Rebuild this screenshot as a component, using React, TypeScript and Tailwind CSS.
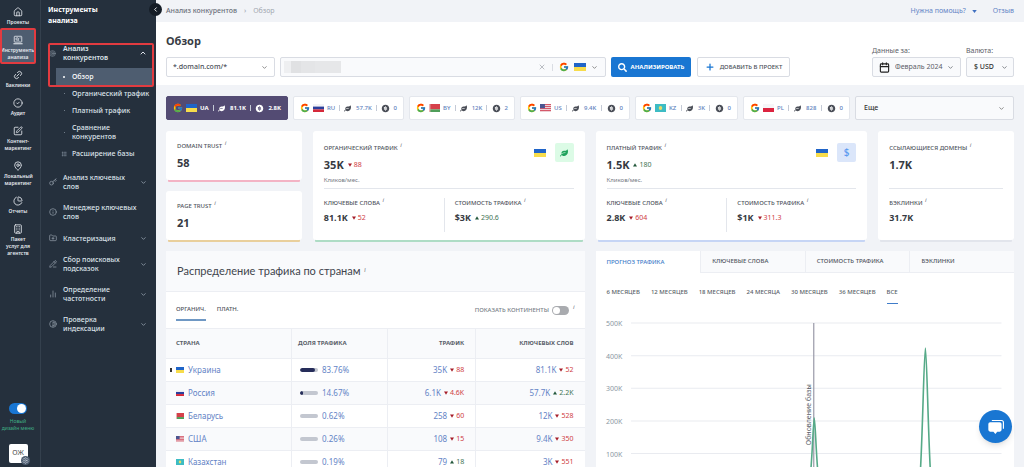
import React, { useState } from "react";
import {
  House,
  Link2,
  CircleCheck,
  SquarePen,
  MapPin,
  ChartPie,
  Building,
  ChevronDown,
  ChevronUp,
  ChevronLeft,
  Target,
  Key,
  Info,
  FolderPlus,
  PencilLine,
  ChartNoAxesColumn,
  Contrast,
  Plus,
  X,
  Calendar,
  Settings,
  Grip,
} from "lucide-react";
import { FcGoogle } from "react-icons/fc";
import { FaLeaf, FaSearch } from "react-icons/fa";
import { RiMoneyDollarCircleFill } from "react-icons/ri";

type Country = "UA" | "RU" | "BY" | "US" | "KZ" | "PL";

function Flag({ code, className }: { code: Country; className: string }) {
  return (
    <svg viewBox="0 0 12 8" preserveAspectRatio="none" className={`shrink-0 ${className}`} aria-hidden="true">
      {code === "UA" && (
        <>
          <rect width="12" height="4" fill="#1f64c8" />
          <rect y="4" width="12" height="4" fill="#f7dc4b" />
        </>
      )}
      {code === "RU" && (
        <>
          <rect width="12" height="8" fill="#f3f3f6" />
          <rect y="2.6" width="12" height="2.8" fill="#2b3f9c" />
          <rect y="5.4" width="12" height="2.6" fill="#d5293a" />
        </>
      )}
      {code === "BY" && (
        <>
          <rect width="12" height="5.4" fill="#d5404a" />
          <rect y="5.4" width="12" height="2.6" fill="#4f9e5a" />
          <rect width="1.5" height="8" fill="#e7b3b3" />
        </>
      )}
      {code === "US" && (
        <>
          <rect width="12" height="8" fill="#f0dfe2" />
          {[0, 2, 4, 6].map((y) => (
            <rect key={y} y={y} width="12" height="1.1" fill="#d5596a" />
          ))}
          <rect width="5.4" height="4.2" fill="#4b5590" />
        </>
      )}
      {code === "KZ" && (
        <>
          <rect width="12" height="8" fill="#3dbcc4" />
          <circle cx="6" cy="4" r="1.9" fill="#e6dc6a" />
        </>
      )}
      {code === "PL" && (
        <>
          <rect width="12" height="8" fill="#f6f6f8" />
          <rect y="4" width="12" height="4" fill="#dc2440" />
        </>
      )}
    </svg>
  );
}

function ToolsIcon({ className }: { className?: string }) {
  return (
    <svg viewBox="0 0 24 24" fill="none" stroke="currentColor" strokeWidth="2" className={className} aria-hidden="true">
      <rect x="3" y="3" width="18" height="14" rx="1.5" />
      <path d="M1 21h22" strokeWidth="2.6" />
      <circle cx="10" cy="9.5" r="3" />
      <path d="M12.3 11.8l2.6 2.4M16 7h2" />
    </svg>
  );
}

const rail = [
  { label: "Проекты", Icon: House },
  { label: "Инструменты анализа", Icon: ToolsIcon, active: true },
  { label: "Баклинки", Icon: Link2 },
  { label: "Аудит", Icon: CircleCheck },
  { label: "Контент-маркетинг", Icon: SquarePen },
  { label: "Локальный маркетинг", Icon: MapPin },
  { label: "Отчеты", Icon: ChartPie },
  { label: "Пакет услуг для агентств", Icon: Building },
];

function Rail() {
  const [on, setOn] = useState(true);
  return (
    <nav className="flex w-[41px] shrink-0 flex-col border-r border-[#34404d] pt-[2px]">
      {rail.map(({ label, Icon, active }) => (
        <a
          key={label}
          href="#"
          className={`relative mr-1 mb-[3px] flex flex-col items-center pt-[5px] pb-px text-center text-[5px] leading-[7px] font-semibold text-[#e4e8ee] ${active ? "bg-[#4e5d70]" : ""}`}
        >
          <Icon className={`mb-[2px] size-[10px] ${label === "Баклинки" ? "-rotate-45" : ""}`} />
          <span className={active ? "" : "w-[28px]"}>{label}</span>
          {active && <span className="absolute -inset-y-[2px] right-0 left-0 rounded-[2px] border-2 border-[#e23b40]" />}
        </a>
      ))}
      <div className="mt-auto mr-1 flex flex-col items-center pb-[4px]">
        <label className="flex flex-col items-center text-center text-[5px] leading-[7px] text-[#3fae84]">
          <input
            type="checkbox"
            role="switch"
            checked={on}
            onChange={() => setOn(!on)}
            className="peer sr-only"
          />
          <span className="mb-[4px] flex h-[11px] w-[18px] items-center rounded-full bg-[#8b95a1] p-px peer-checked:justify-end peer-checked:bg-[#1976d2]">
            <span className="size-[9px] rounded-full bg-white" />
          </span>
          <span>
            Новый
            <br />
            дизайн меню
          </span>
        </label>
        <button className="relative mt-3 size-[19px] rounded-[2px] bg-white text-[7px] text-[#444]">
          ОЖ
          <Settings className="absolute -right-[2px] -bottom-[2px] size-[9px] rounded-full bg-[#4e5d70] p-px text-[#cfd6df]" />
        </button>
      </div>
    </nav>
  );
}

const subItems = [
  { label: "Обзор", active: true },
  { label: "Органический трафик" },
  { label: "Платный трафик" },
  { label: "Сравнение конкурентов" },
  { label: "Расширение базы", grip: true },
];

const groups = [
  { label: "Анализ ключевых слов", Icon: Key, arrow: true },
  { label: "Менеджер ключевых слов", Icon: Info, arrow: false },
  { label: "Кластеризация", Icon: FolderPlus, arrow: true },
  { label: "Сбор поисковых подсказок", Icon: PencilLine, arrow: true },
  { label: "Определение частотности", Icon: ChartNoAxesColumn, arrow: true },
  { label: "Проверка индексации", Icon: Contrast, arrow: true },
];

function ToolsMenu() {
  return (
    <nav className="relative w-[115px] shrink-0 pt-[4px] text-[7px] leading-[9px] font-medium text-[#dce2e9]">
      <h2 className="w-[70px] pl-[7px] leading-[11px] font-bold text-white">Инструменты анализа</h2>
      <button
        aria-label="Свернуть меню"
        className="absolute top-[3px] -right-[6px] z-10 flex size-[13px] items-center justify-center rounded-full bg-[#151d27] text-white"
      >
        <ChevronLeft className="size-[7px]" strokeWidth={3} />
      </button>
      <div className="relative mt-3 mb-[5px]">
        <button className="flex h-[30px] w-full items-center pr-[9px] pl-[8px] text-left font-semibold">
          <Target className="mr-[7px] size-[7px] shrink-0 text-[#7f8b98]" />
          <span className="w-[66px]">Анализ конкурентов</span>
          <ChevronUp className="ml-auto size-[8px]" strokeWidth={3} />
        </button>
        <ul className="pr-[4px] pl-[15px]">
          {subItems.map(({ label, active, grip }) => (
            <li key={label}>
              <a
                href="#"
                className={`flex min-h-[17px] items-center py-[4px] ${active ? "bg-[#4e5d70] text-white" : ""}`}
              >
                <span className="flex w-[16px] shrink-0 justify-center">
                  {grip ? (
                    <Grip className="size-[6px] text-[#8995a3]" />
                  ) : (
                    <span className={`rounded-full ${active ? "size-[2px] bg-white" : "size-px bg-[#8995a3]"}`} />
                  )}
                </span>
                <span className={label.startsWith("Сравнение") ? "w-[60px]" : "whitespace-nowrap"}>{label}</span>
              </a>
            </li>
          ))}
        </ul>
        <span className="pointer-events-none absolute top-[5px] right-[2px] left-[7px] h-[44px] rounded-[2px] border-2 border-[#e23b40]" />
      </div>
      {groups.map(({ label, Icon, arrow }) => (
        <button key={label} className="flex min-h-[22px] w-full items-center py-[6px] pr-[9px] pl-[8px] text-left">
          <Icon className="mr-[6px] size-[8px] shrink-0 text-[#9aa5b1]" />
          <span className={label.startsWith("Анализ") ? "w-[66px]" : "w-[80px]"}>{label}</span>
          {arrow && <ChevronDown className="ml-auto size-[7px] shrink-0 text-[#8a96a3]" strokeWidth={3} />}
        </button>
      ))}
    </nav>
  );
}

function Toolbar() {
  return (
    <section className="flex items-end justify-between bg-white px-[10px] pt-[11px] pb-2">
      <div className="min-w-0">
        <h1 className="mb-2 text-[11px] leading-4 font-bold text-[#383c44]">Обзор</h1>
        <div className="flex gap-[5px]">
          <div className="relative flex w-[109px] items-center">
            <select
              aria-label="Тип домена"
              className="h-5 w-full appearance-none rounded-[2px] border border-[#d9dce3] bg-white pl-[6px] text-[7px] font-medium text-[#4a4e57]"
            >
              <option>*.domain.com/*</option>
            </select>
            <ChevronDown className="pointer-events-none absolute right-[7px] size-[7px] text-[#666]" strokeWidth={2.5} />
          </div>
          <div className="relative flex h-5 w-[326px] items-center gap-[6px] rounded-[2px] border border-[#d9dce3] bg-[#f9fafc] px-[7px]">
            <div className="absolute left-[3px] grid h-[12px] w-[57px] grid-cols-[7px_10px_14px_26px]">
              <span className="bg-[#eeeff1]" />
              <span className="bg-[#e0e1e3]" />
              <span className="bg-[#e4e5e7]" />
              <span className="bg-[#e6e7e9]" />
            </div>
            <input aria-label="Домен" className="h-full min-w-0 flex-1 bg-transparent text-[7px] outline-none" />
            <button aria-label="Очистить">
              <X className="size-[8px] text-[#9a9ea6]" />
            </button>
            <span className="h-[7px] w-px bg-[#dadde3]" />
            <button aria-label="Поисковая система" className="flex items-center gap-[5px]">
              <FcGoogle className="size-[10px]" />
              <Flag code="UA" className="h-[8px] w-[12px]" />
              <ChevronDown className="size-[7px] text-[#666]" strokeWidth={2.5} />
            </button>
          </div>
          <button className="flex h-5 w-[80px] items-center justify-center gap-[4px] rounded-[2px] bg-[#1976d2] text-[6px] font-bold text-white">
            <FaSearch className="size-[9px]" />
            АНАЛИЗИРОВАТЬ
          </button>
          <button className="ml-px flex h-5 w-[93px] items-center justify-center gap-[5px] rounded-[2px] border border-[#d9dce3] bg-white text-[6px] font-medium text-[#4a4e57]">
            <Plus className="size-[10px]" color="#1976d2" strokeWidth={3} />
            ДОБАВИТЬ В ПРОЕКТ
          </button>
        </div>
      </div>
      <div className="flex gap-[5px] text-[7px] text-[#5c6068]">
        <label className="flex w-[89px] flex-col">
          <span className="leading-3">Данные за:</span>
          <span className="relative flex items-center">
            <Calendar className="absolute left-[7px] size-[11px] text-[#222]" strokeWidth={2.5} />
            <select className="h-5 w-full appearance-none rounded-[2px] border border-[#d9dce3] bg-[#f9fafc] pl-[22px]">
              <option>Февраль 2024</option>
            </select>
            <ChevronDown className="pointer-events-none absolute right-[7px] size-[7px]" strokeWidth={2.5} />
          </span>
        </label>
        <label className="flex w-[48px] flex-col">
          <span className="leading-3">Валюта:</span>
          <span className="relative flex items-center">
            <select className="h-5 w-full appearance-none rounded-[2px] border border-[#d9dce3] bg-[#f9fafc] pl-[7px] font-medium text-[#333]">
              <option>$ USD</option>
            </select>
            <ChevronDown className="pointer-events-none absolute right-[6px] size-[7px]" strokeWidth={2.5} />
          </span>
        </label>
      </div>
    </section>
  );
}

const chips: { code: Country; organic: string; paid: string; active?: boolean; width: string }[] = [
  { code: "UA", organic: "81.1K", paid: "2.8K", active: true, width: "w-[122px]" },
  { code: "RU", organic: "57.7K", paid: "0", width: "w-[111px]" },
  { code: "BY", organic: "12K", paid: "2", width: "w-[106px]" },
  { code: "US", organic: "9.4K", paid: "0", width: "w-[110px]" },
  { code: "KZ", organic: "3K", paid: "0", width: "w-[103px]" },
  { code: "PL", organic: "828", paid: "0", width: "w-[107px]" },
];

function Chips() {
  return (
    <div className="flex gap-[5px]">
      {chips.map(({ code, organic, paid, active, width }) => (
        <button
          key={code}
          className={`flex h-6 shrink-0 items-center justify-between rounded-[2px] border px-[6px] text-[6px] ${width} ${
            active ? "border-[#534b73] bg-[#534b73] font-bold text-white" : "border-[#e4e7ed] bg-white font-medium text-[#6282bd]"
          }`}
        >
          <span className="flex items-center gap-[3px]">
            <FcGoogle className="size-[10px]" />
            <Flag code={code} className="h-[8px] w-[11px]" />
            {code}
          </span>
          <span className="h-[6px] w-px bg-[#c4cad6]" />
          <span className="flex items-center gap-[5px]">
            <FaLeaf className={`size-[7px] ${active ? "" : "text-[#4a4e57]"}`} />
            {organic}
          </span>
          <span className="h-[6px] w-px bg-[#c4cad6]" />
          <span className="flex items-center gap-[4px]">
            <RiMoneyDollarCircleFill className={`size-[9px] ${active ? "" : "text-[#4a4e57]"}`} />
            {paid}
          </span>
        </button>
      ))}
      <div className="relative flex flex-1 items-center">
        <select
          aria-label="Другие страны"
          className="h-6 w-full appearance-none rounded-[2px] border border-[#d9dce3] bg-[#f9fafc] pl-2 text-[7px] font-medium text-[#333]"
        >
          <option>Еще</option>
        </select>
        <ChevronDown className="pointer-events-none absolute right-[9px] size-[7px] text-[#666]" strokeWidth={2.5} />
      </div>
    </div>
  );
}

function Hint() {
  return <sup className="ml-px text-[6px] font-normal italic text-[#666b75]">i</sup>;
}

function Delta({ value }: { value: string }) {
  const up = value.startsWith("+");
  return (
    <span
      className={`inline-flex items-center gap-[2px] text-[7px] font-normal ${up ? "text-[#3f7454]" : "text-[#cf3d44]"}`}
    >
      <svg viewBox="0 0 4 4" className="size-[4px]" aria-hidden="true">
        <path d={up ? "M2 0.3L4 3.5H0z" : "M2 3.7L4 0.5H0z"} fill={up ? "#22573a" : "#a51d28"} />
      </svg>
      {value.slice(1)}
    </span>
  );
}

function Metric({ label, value, delta, large }: { label: string; value: string; delta?: string; large?: boolean }) {
  return (
    <div>
      <h3 className="text-[6px] leading-[10px] font-medium whitespace-nowrap text-[#50545d]">
        {label} <Hint />
      </h3>
      <p
        className={`flex items-center gap-[4px] font-bold text-[#363a42] ${large ? "mt-1 text-[11px] leading-[16px]" : "mt-[3px] text-[9px] leading-[14px]"}`}
      >
        {value}
        {delta && <Delta value={delta} />}
      </p>
    </div>
  );
}

function TrafficCard({
  title,
  top,
  words,
  cost,
  className,
  icon,
}: {
  title: string;
  top: [string, string];
  words: [string, string];
  cost: [string, string];
  className: string;
  icon: React.ReactNode;
}) {
  return (
    <article className={`rounded-[3px] bg-white px-[11px] pt-3 ${className}`}>
      <div className="flex h-[46px] items-start justify-between border-b border-[#e3e6ec]">
        <div>
          <Metric label={title} value={top[0]} delta={top[1]} large />
          <p className="mt-[2px] text-[6px] leading-[10px] text-[#747983]">Кликов/мес.</p>
        </div>
        <div className="flex items-center gap-[9px]">
          <Flag code="UA" className="h-[8px] w-[12px]" />
          {icon}
        </div>
      </div>
      <div className="mt-[9px] grid h-[34px] grid-cols-[12fr_13fr]">
        <Metric label="КЛЮЧЕВЫЕ СЛОВА" value={words[0]} delta={words[1]} />
        <div className="border-l border-[#e3e6ec] pl-[10px]">
          <Metric label="СТОИМОСТЬ ТРАФИКА" value={cost[0]} delta={cost[1]} />
        </div>
      </div>
    </article>
  );
}

function SummaryCards() {
  return (
    <section className="mt-[11px] grid grid-cols-[1fr_2fr_2fr_1fr] gap-[11px]">
      <div className="grid gap-[11px]">
        <article className="rounded-[3px] bg-white px-[11px] pt-[10px] shadow-[0_4px_0_-2px_#f3b3c4]">
          <Metric label="DOMAIN TRUST" value="58" large />
        </article>
        <article className="rounded-[3px] bg-white px-[11px] pt-[10px] shadow-[0_4px_0_-2px_#e9cf9c]">
          <Metric label="PAGE TRUST" value="21" large />
        </article>
      </div>
      <TrafficCard
        title="ОРГАНИЧЕСКИЙ ТРАФИК"
        top={["35K", "-88"]}
        words={["81.1K", "-52"]}
        cost={["$3K", "+290.6"]}
        className="h-[109px] shadow-[0_4px_0_-2px_#aedcc5]"
        icon={
          <span className="flex size-[19px] items-center justify-center rounded-[2px] bg-[#dcfbe6]">
            <FaLeaf className="size-[8px] text-[#1fa35c]" />
          </span>
        }
      />
      <TrafficCard
        title="ПЛАТНЫЙ ТРАФИК"
        top={["1.5K", "+180"]}
        words={["2.8K", "-604"]}
        cost={["$1K", "-311.3"]}
        className="h-[109px] shadow-[0_4px_0_-2px_#c6d5f5]"
        icon={
          <span className="flex size-[19px] items-center justify-center rounded-[2px] bg-[#dbe6fa] text-[10px] font-medium text-[#5b9bf0]">
            $
          </span>
        }
      />
      <article className="h-[109px] rounded-[3px] bg-white px-[11px] pt-3 shadow-[0_4px_0_-2px_#e2e5ec]">
        <div className="h-[46px] border-b border-[#e3e6ec]">
          <Metric label="ССЫЛАЮЩИЕСЯ ДОМЕНЫ" value="1.7K" large />
        </div>
        <div className="mt-[9px]">
          <Metric label="БЭКЛИНКИ" value="31.7K" />
        </div>
      </article>
    </section>
  );
}

const rows: {
  code: Country;
  name: string;
  share: number;
  traffic: [string, string];
  words: [string, string];
}[] = [
  { code: "UA", name: "Украина", share: 83.76, traffic: ["35K", "-88"], words: ["81.1K", "-52"] },
  { code: "RU", name: "Россия", share: 14.67, traffic: ["6.1K", "-4.6K"], words: ["57.7K", "+2.2K"] },
  { code: "BY", name: "Беларусь", share: 0.62, traffic: ["258", "-60"], words: ["12K", "-528"] },
  { code: "US", name: "США", share: 0.26, traffic: ["108", "-15"], words: ["9.4K", "-350"] },
  { code: "KZ", name: "Казахстан", share: 0.19, traffic: ["79", "+18"], words: ["3K", "-551"] },
];

function CountriesTable() {
  const [continents, setContinents] = useState(false);
  return (
    <section className="bg-white">
      <h2 className="flex h-[41px] items-center border-b border-[#eceef3] bg-[#f9fafc] px-[11px] font-['Lato','Noto_Sans',sans-serif] text-[11px] text-[#41454d]">
        <span>
          Распределение трафика по странам <Hint />
        </span>
      </h2>
      <div className="flex h-[36px] items-center justify-between px-[10px] text-[6px] font-medium text-[#50545d]">
        <div className="flex h-[22px] gap-[11px]">
          <button className="border-b-2 border-[#6f98c4]">ОРГАНИЧ.</button>
          <button className="border-b-2 border-transparent">ПЛАТН.</button>
        </div>
        <label className="flex items-center gap-[3px] text-[#7a7f89]">
          ПОКАЗАТЬ КОНТИНЕНТЫ
          <input
            type="checkbox"
            role="switch"
            checked={continents}
            onChange={() => setContinents(!continents)}
            className="peer sr-only"
          />
          <span className="flex h-[9px] w-[17px] items-center rounded-full bg-[#a9abaf] p-px peer-checked:justify-end peer-checked:bg-[#1976d2]">
            <span className="size-[7px] rounded-full bg-white" />
          </span>
          <Hint />
        </label>
      </div>
      <table className="w-full table-fixed border-collapse text-[8px] text-[#6484c6]">
        <thead>
          <tr className="h-[30px] border-y border-[#eceef3] bg-[#f9fafc] text-[6px] text-[#5a5f69]">
            <th className="w-[30%] border-r border-[#eceef3] pl-[10px] text-left font-bold">СТРАНА</th>
            <th className="w-[23%] border-r border-[#eceef3] pl-[6px] text-left font-bold">ДОЛЯ ТРАФИКА</th>
            <th className="w-[21%] border-r border-[#eceef3] pr-[11px] text-right font-bold">ТРАФИК</th>
            <th className="pr-[11px] text-right font-bold">КЛЮЧЕВЫХ СЛОВ</th>
          </tr>
        </thead>
        <tbody>
          {rows.map(({ code, name, share, traffic, words }, i) => (
            <tr key={code} className="h-[23px] border-b border-[#eceef3] even:bg-[#f9fafc]">
              <td className="border-r border-[#eceef3] pl-[4px]">
                <a href="#" className="flex items-center">
                  <span className={`mr-[4px] h-[4px] w-[2px] ${i === 0 ? "bg-[#333]" : ""}`} />
                  <Flag code={code} className="mr-[4px] h-[6px] w-[8px]" />
                  {name}
                </a>
              </td>
              <td className="border-r border-[#eceef3] pl-[8px]">
                <span className="flex items-center gap-[4px]">
                  <span className="h-[4px] w-[18px] overflow-hidden rounded-full bg-[#c3c7d0]">
                    <span className="block h-full rounded-full bg-[#262d5a]" style={{ width: share > 1 ? `${share}%` : 0 }} />
                  </span>
                  {share}%
                </span>
              </td>
              <td className="border-r border-[#eceef3] pr-[11px]">
                <span className="flex items-center justify-end gap-[3px]">
                  {traffic[0]}
                  <Delta value={traffic[1]} />
                </span>
              </td>
              <td className="pr-[11px]">
                <span className="flex items-center justify-end gap-[3px]">
                  {words[0]}
                  <Delta value={words[1]} />
                </span>
              </td>
            </tr>
          ))}
        </tbody>
      </table>
    </section>
  );
}

const tabs = ["ПРОГНОЗ ТРАФИКА", "КЛЮЧЕВЫЕ СЛОВА", "СТОИМОСТЬ ТРАФИКА", "БЭКЛИНКИ"];
const periods = ["6 МЕСЯЦЕВ", "12 МЕСЯЦЕВ", "18 МЕСЯЦЕВ", "24 МЕСЯЦА", "30 МЕСЯЦЕВ", "36 МЕСЯЦЕВ", "ВСЕ"];
const ticks = ["500K", "400K", "300K", "200K", "100K"];

function ForecastPanel() {
  return (
    <section className="bg-white">
      <div className="grid h-[22px] grid-cols-4 text-[6px] font-medium text-[#50545d]">
        {tabs.map((t, i) => (
          <button
            key={t}
            className={`pl-[11px] text-left ${i === 0 ? "text-[#3f7cc9]" : "border-b border-l border-[#eceef3] bg-[#f9fafc]"}`}
          >
            {t}
          </button>
        ))}
      </div>
      <div className="mt-[9px] flex h-[22px] gap-[11px] px-[11px] text-[6px] font-medium whitespace-nowrap text-[#5a5f69]">
        {periods.map((p) => (
          <button key={p} className={`border-b ${p === "ВСЕ" ? "border-[#3f7cc9]" : "border-transparent"}`}>
            {p}
          </button>
        ))}
      </div>
      <svg viewBox="0 0 418 185" className="block w-full" role="img" aria-label="Прогноз трафика">
        {ticks.map((t, i) => (
          <g key={t}>
            <path d={`M35 ${19 + i * 32.6}H405`} stroke="#e9ebf0" />
            <text x="10" y={22 + i * 32.6} fontSize="7" fill="#8a98a3">
              {t}
            </text>
          </g>
        ))}
        <path d="M35 182H405" stroke="#e9ebf0" />
        <path d="M217.5 19V182" stroke="#9a9aa8" strokeWidth="1.2" />
        <g fill="none" stroke="#56aa88" strokeWidth="1.6">
          <path d="M213 182C216 160 217 114 218 114S220 160 223 182" />
          <path d="M323 182C326 150 327.5 44 329 44S332 150 335 182" />
        </g>
        <text transform="translate(215 141) rotate(-90)" fontSize="7" fill="#5a5f69">
          Обновление базы
        </text>
      </svg>
    </section>
  );
}

export default function App() {
  return (
    <div className="flex h-screen overflow-hidden bg-[#f1f3f7] font-['Noto_Sans','Open_Sans',sans-serif]">
      <aside className="flex shrink-0 bg-[#25303d]">
        <Rail />
        <ToolsMenu />
      </aside>
      <main className="min-w-0 flex-1 overflow-y-auto [scrollbar-width:none]">
        <header className="flex h-[22px] items-center justify-between px-[10px] text-[7px]">
          <nav aria-label="Навигация" className="flex items-center gap-[7px] font-medium text-[#6c717b]">
            <a href="#">Анализ конкурентов</a>
            <span className="text-[#a3a8b1]">›</span>
            <span className="font-normal text-[#a3a8b1]">Обзор</span>
          </nav>
          <div className="flex items-center gap-4 text-[#6484c6]">
            <button className="flex items-center gap-[6px]">
              Нужна помощь?
              <svg viewBox="0 0 6 4" className="h-[3px] w-[5px]" aria-hidden="true">
                <path d="M0 0h6L3 4z" fill="#3f6fc0" />
              </svg>
            </button>
            <a href="#">Отзыв</a>
          </div>
        </header>
        <Toolbar />
        <div className="px-[10px] pt-[11px] pb-4">
          <Chips />
          <SummaryCards />
          <div className="mt-[11px] grid grid-cols-2 items-start gap-[11px]">
            <CountriesTable />
            <ForecastPanel />
          </div>
        </div>
      </main>
      <button
        aria-label="Открыть чат"
        className="fixed right-[12px] bottom-[24px] flex size-[33px] items-center justify-center rounded-full bg-[#1976d2] text-white shadow-md"
      >
        <svg viewBox="0 0 24 24" className="size-[20px]" aria-hidden="true">
          <path d="M7 4.2h11.5a2.4 2.4 0 0 1 2.4 2.4V14" fill="none" stroke="#fff" strokeWidth="1.4" />
          <path
            d="M5 6.2h11.5a2.2 2.2 0 0 1 2.2 2.2v7a2.2 2.2 0 0 1-2.2 2.2H13.5l-2.3 2.8-2.3-2.8H5a2.2 2.2 0 0 1-2.2-2.2v-7A2.2 2.2 0 0 1 5 6.2z"
            fill="#fff"
          />
        </svg>
      </button>
    </div>
  );
}
